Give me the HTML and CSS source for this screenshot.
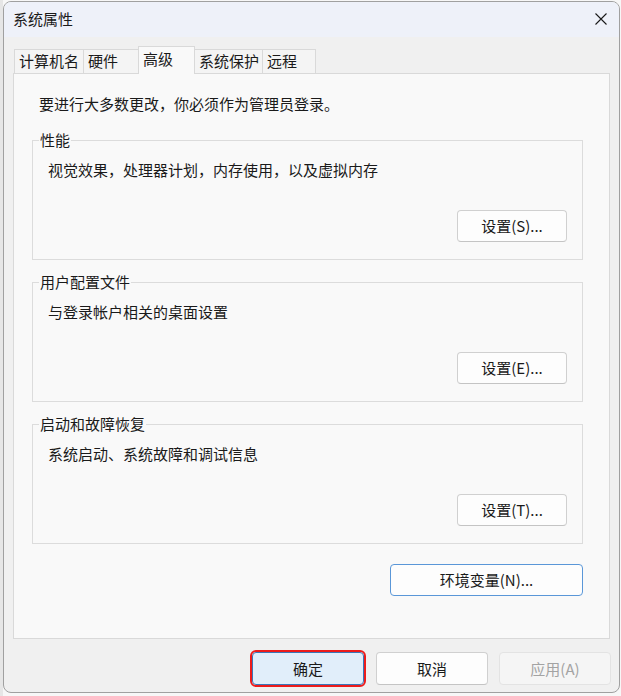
FILE: index.html
```html
<!DOCTYPE html>
<html lang="zh-CN">
<head>
<meta charset="utf-8">
<title>系统属性</title>
<link rel="stylesheet" href="styles.css">
</head>
<body>
<div class="backdrop">
  <div class="window">
    <div class="titlebar">
      <span class="title">系统属性</span>
      <svg class="close" width="12" height="12" viewBox="0 0 12 12"><path d="M0.5 0.5 L11.5 11.5 M11.5 0.5 L0.5 11.5" stroke="#1a1a1a" stroke-width="1.1" fill="none"/></svg>
    </div>
    <div class="content">
      <div class="tabs">
        <div class="tab t1">计算机名</div>
        <div class="tab t2">硬件</div>
        <div class="tab t3 active">高级</div>
        <div class="tab t4">系统保护</div>
        <div class="tab t5">远程</div>
      </div>
      <div class="panel">
        <div class="intro">要进行大多数更改，你必须作为管理员登录。</div>
        <div class="group first">
          <span class="legend">性能</span>
          <div class="desc">视觉效果，处理器计划，内存使用，以及虚拟内存</div>
          <button class="btn set">设置(S)...</button>
        </div>
        <div class="group">
          <span class="legend">用户配置文件</span>
          <div class="desc">与登录帐户相关的桌面设置</div>
          <button class="btn set">设置(E)...</button>
        </div>
        <div class="group">
          <span class="legend">启动和故障恢复</span>
          <div class="desc">系统启动、系统故障和调试信息</div>
          <button class="btn set">设置(T)...</button>
        </div>
        <div class="envrow">
          <button class="btn env">环境变量(N)...</button>
        </div>
      </div>
      <div class="actions">
        <button class="btn act ok">确定</button>
        <button class="btn act">取消</button>
        <button class="btn act disabled">应用(A)</button>
      </div>
    </div>
  </div>
</div>
</body>
</html>
```

FILE: styles.css
```css
* { box-sizing: border-box; }
html, body {
  margin: 0;
  padding: 0;
  background: #f4f4f4;
}
body {
  font-family: "Noto Sans CJK SC", "Microsoft YaHei", sans-serif;
  font-size: 15px;
  line-height: 20px;
  color: #1a1a1a;
  width: 621px;
  height: 696px;
  overflow: hidden;
}
.backdrop {
  width: 621px;
  height: 696px;
  padding-top: 1px;
  padding-left: 3px;
  background: linear-gradient(to right, #e6e6e6 0, #e6e6e6 3px, #f7f7f7 3px);
}
.window {
  width: 617px;
  height: 692px;
  border: 1px solid #a0a0a0;
  border-radius: 8px;
  background: #f0f0f0;
  overflow: hidden;
  display: flex;
  flex-direction: column;
}
.titlebar {
  height: 35px;
  flex: none;
  background: #eef1f9;
  display: flex;
  align-items: center;
  justify-content: space-between;
  padding: 0 12px 2px 9px;
}
.title {
  font-size: 15px;
  line-height: 20px;
}
.close { display: block; margin-top: 1px; }
.content {
  padding: 0 9px;
  display: flex;
  flex-direction: column;
}
.tabs {
  margin-top: 9px;
  height: 27px;
  display: flex;
  align-items: flex-end;
  padding-left: 1px;
}
.tab {
  height: 24px;
  border: 1px solid #d9d9d9;
  border-bottom: none;
  background: #f4f4f4;
  padding: 1px 0 0 4px;
  margin-left: -1px;
  white-space: nowrap;
}
.tab:first-child { margin-left: 0; }
.t1 { width: 70px; }
.t2 { width: 56px; }
.t3 { width: 57px; }
.t4 { width: 69px; }
.t5 { width: 54px; }
.tab.active {
  height: 28px;
  margin-bottom: -1px;
  background: #f9f9f9;
  padding-top: 2px;
  position: relative;
  z-index: 1;
}
.panel {
  height: 566px;
  border: 1px solid #d9d9d9;
  background: #f9f9f9;
  padding: 0 26px 0 18px;
}
.intro {
  margin-top: 20px;
  padding-left: 7px;
  white-space: nowrap;
}
.group {
  margin-top: 22px;
  width: 551px;
  height: 120px;
  border: 1px solid #dcdcdc;
  display: flex;
  flex-direction: column;
}
.group.first { margin-top: 26px; }
.legend {
  display: block;
  width: fit-content;
  margin: -11px 0 0 6px;
  padding: 0 1px;
  background: #f9f9f9;
  white-space: nowrap;
}
.desc {
  margin-top: 10px;
  padding-left: 15px;
  white-space: nowrap;
}
.btn {
  font-family: inherit;
  font-size: 15px;
  line-height: 20px;
  color: #1a1a1a;
  background: #fdfdfd;
  border: 1px solid #d0d0d0;
  border-bottom-color: #c4c4c4;
  border-radius: 4px;
  padding: 0;
  margin: 0;
}
.set {
  width: 110px;
  height: 32px;
  align-self: flex-end;
  margin: auto 15px 17px 0;
}
.envrow {
  margin-top: 20px;
  width: 551px;
  display: flex;
  justify-content: flex-end;
}
.env {
  width: 193px;
  height: 32px;
  border-color: #5a97d8;
}
.actions {
  margin-top: 13px;
  margin-right: -1px;
  display: flex;
  justify-content: flex-end;
  gap: 11px;
}
.act {
  width: 112px;
  height: 33px;
}
.ok {
  background: #e1eefa;
  border-color: #3a76b8;
  outline: 2px solid #ec1c1c;
  outline-offset: 0;
  margin-right: 1px;
}
.disabled {
  background: #f5f5f5;
  border-color: #e3e3e3;
  color: #a3a3a3;
}
```
